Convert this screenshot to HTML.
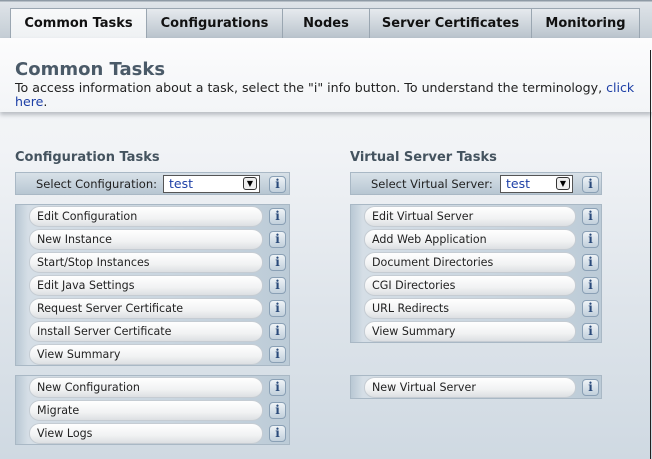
<!DOCTYPE html>
<html><head><meta charset="utf-8"><style>
*{margin:0;padding:0;box-sizing:border-box}
body{width:652px;height:459px;overflow:hidden;position:relative;font-family:"DejaVu Sans","Liberation Sans",sans-serif;background:linear-gradient(#f6f7f9 0px,#f1f3f6 150px,#dfe5eb 300px,#cfd9e2 459px);}
.top{position:absolute;left:0;top:0;width:652px;height:38px;background:linear-gradient(#8e9aa5 0,#8e9aa5 1px,#dfe4e9 2px,#c4cdd5 38px);}
.tab{position:absolute;top:8px;height:30px;border:1px solid #9aa6b1;border-bottom:none;background:linear-gradient(#e6eaee,#b9c3cc);font-weight:bold;font-size:13px;color:#111;text-align:center;line-height:29px}
.tab.act{background:linear-gradient(#f8f9fa,#eef1f3);height:31px}
.hdr{position:absolute;left:0;top:38px;width:652px;height:74px;background:linear-gradient(#fcfcfd,#f3f5f7);box-shadow:0 3px 4px rgba(80,90,100,.35)}
h1{position:absolute;left:15px;top:59px;font-size:18px;font-weight:bold;color:#4a5a68}
.desc{position:absolute;left:15px;top:81px;width:636px;font-size:12.6px;line-height:14px;color:#222}
a{color:#1d3fa6;text-decoration:none}
h2{position:absolute;top:150px;font-size:13px;font-weight:bold;color:#44535f}
.grp{position:absolute;border:1px solid #a9b8c5;background:linear-gradient(90deg,#b9c8d4,#d5dee6 12px,#c9d5df 60%,#bccbd7)}
.row{position:absolute;height:23px;left:0;right:0}
.btn{position:absolute;left:13px;top:1px;height:21px;border-radius:11px 11px 11px 11px/10px;background:linear-gradient(#ffffff,#f1f2f3 60%,#dcdfe2);border:1px solid #c5ccd3;font-size:11.1px;line-height:19px;padding-left:7px;color:#222}
.info{position:absolute;top:3px;width:17px;height:17px;border:1px solid #8aa0b5;border-radius:4px;background:linear-gradient(#eef3f7,#c2d0dc);color:#2a4a7a;font:bold 12px "DejaVu Serif",serif;text-align:center;line-height:15px}
.sel{position:absolute;top:2px;height:18px;border:1px solid #555;background:#fff;color:#1d3fa6;font-size:12.5px;line-height:16px;padding-left:5px}
.arr{position:absolute;right:2px;top:1px;width:14px;height:13px;border:1px solid #333;border-radius:3px;background:#eee;font-size:8px;line-height:11px;text-align:center;color:#000}
.lbl{position:absolute;top:0;font-size:11.5px;line-height:22px;color:#222}
</style></head><body>
<div class="top"></div>
<div class="tab act" style="left:10px;width:137px">Common Tasks</div>
<div class="tab" style="left:146px;width:137px">Configurations</div>
<div class="tab" style="left:282px;width:88px">Nodes</div>
<div class="tab" style="left:369px;width:163px">Server Certificates</div>
<div class="tab" style="left:531px;width:109px">Monitoring</div>
<div class="hdr"></div>
<div style="position:absolute;left:650px;top:50px;width:1px;height:409px;background:#222"></div>
<h1>Common Tasks</h1>
<div class="desc">To access information about a task, select the "i" info button. To understand the terminology, <a>click here</a>.</div>

<h2 style="left:15px">Configuration Tasks</h2>
<h2 style="left:350px">Virtual Server Tasks</h2>

<div class="grp" style="left:15px;top:172px;width:275px;height:23px;background:linear-gradient(#d8e1e8,#b7c6d2)">
<div class="lbl" style="left:20px">Select Configuration:</div>
<div class="sel" style="left:147px;width:97px">test<div class="arr">▼</div></div>
<div class="info" style="left:253px">i</div></div>

<div class="grp" style="left:350px;top:172px;width:252px;height:23px;background:linear-gradient(#d8e1e8,#b7c6d2)">
<div class="lbl" style="left:20px">Select Virtual Server:</div>
<div class="sel" style="left:149px;width:73px">test<div class="arr">▼</div></div>
<div class="info" style="left:231px">i</div></div>

<div class="grp" style="left:15px;top:204px;width:275px;height:162px">
<div class="row" style="top:0"><div class="btn" style="width:234px">Edit Configuration</div><div class="info" style="left:253px">i</div></div>
<div class="row" style="top:23px"><div class="btn" style="width:234px">New Instance</div><div class="info" style="left:253px">i</div></div>
<div class="row" style="top:46px"><div class="btn" style="width:234px">Start/Stop Instances</div><div class="info" style="left:253px">i</div></div>
<div class="row" style="top:69px"><div class="btn" style="width:234px">Edit Java Settings</div><div class="info" style="left:253px">i</div></div>
<div class="row" style="top:92px"><div class="btn" style="width:234px">Request Server Certificate</div><div class="info" style="left:253px">i</div></div>
<div class="row" style="top:115px"><div class="btn" style="width:234px">Install Server Certificate</div><div class="info" style="left:253px">i</div></div>
<div class="row" style="top:138px"><div class="btn" style="width:234px">View Summary</div><div class="info" style="left:253px">i</div></div>
</div>

<div class="grp" style="left:15px;top:375px;width:275px;height:70px">
<div class="row" style="top:0"><div class="btn" style="width:234px">New Configuration</div><div class="info" style="left:253px">i</div></div>
<div class="row" style="top:23px"><div class="btn" style="width:234px">Migrate</div><div class="info" style="left:253px">i</div></div>
<div class="row" style="top:46px"><div class="btn" style="width:234px">View Logs</div><div class="info" style="left:253px">i</div></div>
</div>

<div class="grp" style="left:350px;top:204px;width:252px;height:139px">
<div class="row" style="top:0"><div class="btn" style="width:212px">Edit Virtual Server</div><div class="info" style="left:231px">i</div></div>
<div class="row" style="top:23px"><div class="btn" style="width:212px">Add Web Application</div><div class="info" style="left:231px">i</div></div>
<div class="row" style="top:46px"><div class="btn" style="width:212px">Document Directories</div><div class="info" style="left:231px">i</div></div>
<div class="row" style="top:69px"><div class="btn" style="width:212px">CGI Directories</div><div class="info" style="left:231px">i</div></div>
<div class="row" style="top:92px"><div class="btn" style="width:212px">URL Redirects</div><div class="info" style="left:231px">i</div></div>
<div class="row" style="top:115px"><div class="btn" style="width:212px">View Summary</div><div class="info" style="left:231px">i</div></div>
</div>

<div class="grp" style="left:350px;top:375px;width:252px;height:24px">
<div class="row" style="top:0"><div class="btn" style="width:212px">New Virtual Server</div><div class="info" style="left:231px">i</div></div>
</div>
</body></html>
